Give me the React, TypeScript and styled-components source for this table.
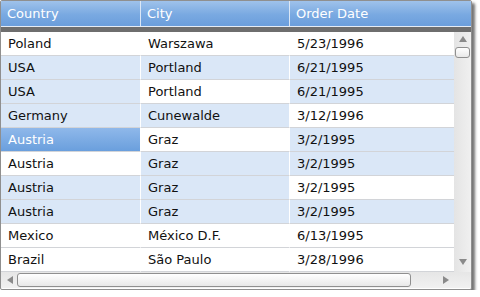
import React from "react";
import styled, { createGlobalStyle } from "styled-components";

const Global = createGlobalStyle`
  html, body { margin: 0; padding: 0; background: #ffffff; }
  body { font-family: "DejaVu Sans", Verdana, sans-serif; }
`;

const Frame = styled.div`
  width: 470px;
  height: 288px;
  border: 1px solid #8f8f8f;
  border-radius: 2px;
  box-shadow: 3px 3px 3px rgba(0, 0, 0, 0.55);
  display: flex;
  flex-direction: column;
  overflow: hidden;
  background: #ffffff;
`;

const Header = styled.div`
  display: grid;
  grid-template-columns: 140px 149px 1fr;
  height: 25px;
  background: linear-gradient(#9fc2eb, #79a9e1 55%, #6b9edc);
  border-bottom: 1px solid #e4ecf6;
`;

const HeaderCell = styled.div`
  display: flex;
  align-items: center;
  padding-left: 6px;
  padding-bottom: 1px;
  color: #ffffff;
  font-size: 13px;
  border-right: 1px solid #dbe7f6;
  &:last-child { border-right: none; }
`;

const Band = styled.div`
  height: 5px;
  background: #6e6e6e;
`;

const Body = styled.div`
  display: flex;
  height: 240px;
`;

const Rows = styled.div`
  width: 453px;
  display: flex;
  flex-direction: column;
`;

const Row = styled.div`
  display: grid;
  grid-template-columns: 140px 149px 1fr;
  height: 24px;
`;

type Kind = "w" | "b" | "s";

const Cell = styled.div<{ $kind: Kind }>`
  display: flex;
  align-items: center;
  padding-left: 7px;
  font-size: 13px;
  color: ${(p) => (p.$kind === "s" ? "#ffffff" : "#111111")};
  background: ${(p) =>
    p.$kind === "s"
      ? "linear-gradient(#8fb8ea, #6a9fdd)"
      : p.$kind === "b"
      ? "#dae7f7"
      : "#ffffff"};
  border-right: 1px solid #ffffff;
  border-bottom: 1px solid #d2d4d8;
  &:last-child { border-right: none; }
`;

const VScroll = styled.div`
  width: 17px;
  display: flex;
  flex-direction: column;
  align-items: center;
  background: linear-gradient(to right, #e4e4e4, #f0f0f0);
`;

const ArrowUp = styled.div`
  margin-top: 4px;
  width: 0;
  height: 0;
  border-left: 4px solid transparent;
  border-right: 4px solid transparent;
  border-bottom: 6px solid #8a8a8a;
`;

const ArrowDown = styled.div`
  margin-top: auto;
  margin-bottom: 7px;
  width: 0;
  height: 0;
  border-left: 4px solid transparent;
  border-right: 4px solid transparent;
  border-top: 6px solid #8a8a8a;
`;

const VThumb = styled.div`
  margin-top: 5px;
  width: 13px;
  height: 9px;
  border: 1px solid #8f8f8f;
  border-radius: 3px;
  background: linear-gradient(#ffffff, #e8e8e8);
`;

const HScroll = styled.div`
  height: 16px;
  display: flex;
  align-items: center;
  background: linear-gradient(#e6e6e6, #f1f1f1);
`;

const ArrowLeft = styled.div`
  margin-left: 6px;
  width: 0;
  height: 0;
  border-top: 4px solid transparent;
  border-bottom: 4px solid transparent;
  border-right: 6px solid #8a8a8a;
`;

const ArrowRight = styled.div`
  margin-left: 32px;
  width: 0;
  height: 0;
  border-top: 4px solid transparent;
  border-bottom: 4px solid transparent;
  border-left: 6px solid #8a8a8a;
`;

const HThumb = styled.div`
  margin-left: 4px;
  width: 392px;
  height: 12px;
  border: 1px solid #8f8f8f;
  border-radius: 3px;
  background: linear-gradient(#ffffff, #e8e8e8);
`;

const data: [string, string, string, Kind, Kind, Kind][] = [
  ["Poland", "Warszawa", "5/23/1996", "w", "w", "w"],
  ["USA", "Portland", "6/21/1995", "b", "b", "b"],
  ["USA", "Portland", "6/21/1995", "b", "w", "b"],
  ["Germany", "Cunewalde", "3/12/1996", "b", "b", "w"],
  ["Austria", "Graz", "3/2/1995", "s", "w", "b"],
  ["Austria", "Graz", "3/2/1995", "w", "b", "b"],
  ["Austria", "Graz", "3/2/1995", "b", "b", "w"],
  ["Austria", "Graz", "3/2/1995", "b", "b", "b"],
  ["Mexico", "México D.F.", "6/13/1995", "w", "w", "w"],
  ["Brazil", "São Paulo", "3/28/1996", "w", "w", "w"],
];

export default function App() {
  return (
    <>
      <Global />
      <Frame>
        <Header>
          <HeaderCell>Country</HeaderCell>
          <HeaderCell>City</HeaderCell>
          <HeaderCell>Order Date</HeaderCell>
        </Header>
        <Band />
        <Body>
          <Rows>
            {data.map((r, i) => (
              <Row key={i}>
                <Cell $kind={r[3]}>{r[0]}</Cell>
                <Cell $kind={r[4]}>{r[1]}</Cell>
                <Cell $kind={r[5]}>{r[2]}</Cell>
              </Row>
            ))}
          </Rows>
          <VScroll>
            <ArrowUp />
            <VThumb />
            <ArrowDown />
          </VScroll>
        </Body>
        <HScroll>
          <ArrowLeft />
          <HThumb />
          <ArrowRight />
        </HScroll>
      </Frame>
    </>
  );
}
